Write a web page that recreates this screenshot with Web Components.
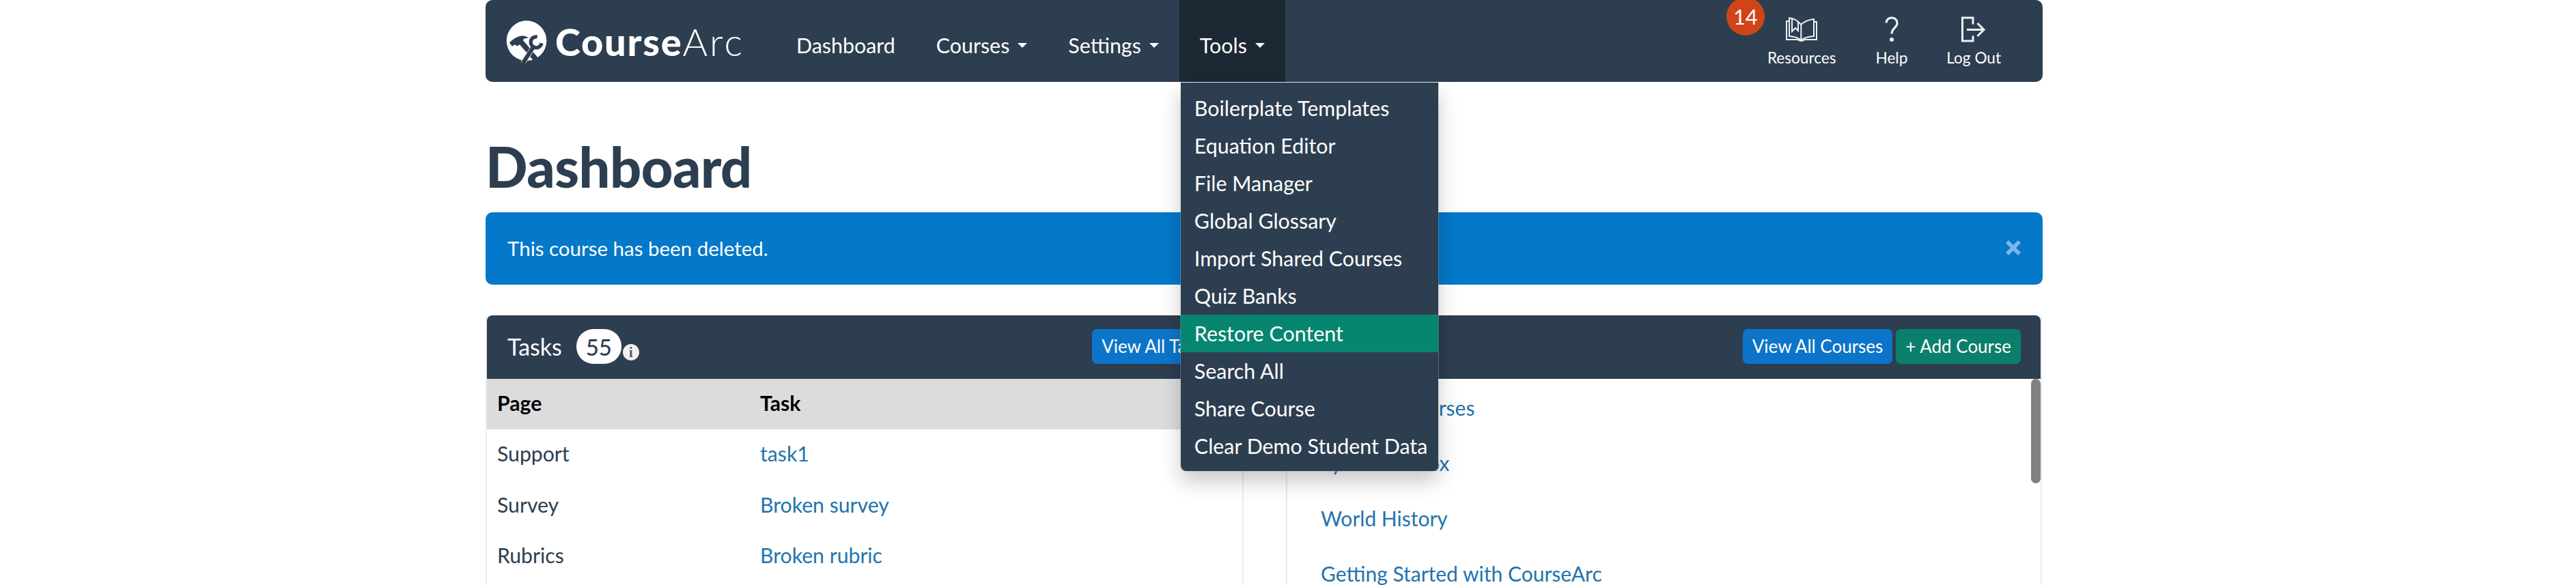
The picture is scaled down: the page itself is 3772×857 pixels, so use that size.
<!DOCTYPE html>
<html lang="en">
<head>
<meta charset="utf-8">
<title>CourseArc Dashboard</title>
<style>
  html, body { margin: 0; background: #fff; overflow: hidden; }
  body { font-family: Lato, "Open Sans", sans-serif; color: #2c3e50; height: 857px; }
  .page { width: 2280px; margin-left: 711px; }
</style>
</head>
<body>
<div class="page">
  <ca-navbar></ca-navbar>
  <ca-heading>Dashboard</ca-heading>
  <ca-alert>This course has been deleted.</ca-alert>
  <ca-columns>
    <ca-tasks slot="left"></ca-tasks>
    <ca-courses slot="right"></ca-courses>
  </ca-columns>
</div>

<script>
class CaNavbar extends HTMLElement {
  connectedCallback() {
    const tools = ['Boilerplate Templates', 'Equation Editor', 'File Manager', 'Global Glossary',
      'Import Shared Courses', 'Quiz Banks', 'Restore Content', 'Search All', 'Share Course', 'Clear Demo Student Data'];
    this.attachShadow({ mode: 'open' });
    this.shadowRoot.innerHTML = `
      <style>
        :host { display: block; position: relative; z-index: 10; }
        nav {
          background: #2d3e50; height: 120px; border-radius: 10px;
          display: flex; align-items: stretch; color: #fff; font-size: 30.400px;
        }
        .logo { display: flex; align-items: center; flex: none; margin-left: 24px; width: 401px; gap: 3px; }
        .logo svg { width: 75px; height: 72px; flex: none; position: relative; top: -2px; }
        .word { font-size: 56px; line-height: 1; font-weight: 900; letter-spacing: 1.700px; position: relative; top: 1px; }
        .word span { font-weight: 300; letter-spacing: 3.200px; }
        .menu { display: flex; align-items: stretch; }
        .item { display: flex; align-items: center; padding: 12px 30px 0; position: relative; }
        .caret { width: 0; height: 0; border: 7.500px solid transparent; border-top-color: #fff; border-bottom: 0; margin-left: 12px; }
        .open { background: #1c2833; }
        .right { margin-left: auto; display: flex; align-items: stretch; padding-right: 61px; }
        .tool { display: flex; flex-direction: column; align-items: center; font-size: 22.600px; padding-top: 24px; position: relative; }
        .tool svg { height: 38px; display: block; margin-bottom: 9px; }
        .badge {
          position: absolute; left: -60px; top: -4px; width: 56px; height: 56px; border-radius: 50%;
          background: #cf4517; color: #fff; font-size: 31px; display: flex; align-items: center; justify-content: center;
        }
        .drop {
          position: absolute; left: 2px; top: 121px; width: 377px; padding: 10px 0 9px; box-sizing: border-box;
          background: #2d3e50; border-radius: 0 0 8px 8px;
          box-shadow: 0 15px 30px rgba(0,0,0,.22), 0 0 0 1px rgba(200,205,215,.35);
        }
        .drop a { display: block; height: 55px; line-height: 55px; padding-left: 20px; color: #fff; white-space: nowrap; }
        .drop a.on { background: #07866f; }
      </style>
      <nav>
        <div class="logo">
          <svg viewBox="0 0 225 216">
            <circle cx="108" cy="113" r="88" fill="#fff"/>
            <path fill="#2d3e50" d="M33 122C45 108 62 96 82 92c16-2 28 2 36 10-14-2-22 2-26 8l72 84-17 16-69-80-12 7-8-7-13 7z"/>
            <path fill="none" stroke="#fff" stroke-width="22" d="M92 212l46-72"/>
            <path fill="none" stroke="#2d3e50" stroke-width="18" d="M92 212l46-72"/>
            <path fill="none" stroke="#2d3e50" stroke-width="16" d="M155 96a24 24 0 1 0 19 28"/>
            <path fill="#2d3e50" d="M84 216l12-12 14 12zM160 216l-8-10 14-8 10 18z"/>
          </svg>
          <span class="word">Course<span>Arc</span></span>
        </div>
        <div class="menu">
          <div class="item">Dashboard</div>
          <div class="item">Courses<i class="caret"></i></div>
          <div class="item">Settings<i class="caret"></i></div>
          <div class="item open">Tools<i class="caret"></i>
            <div class="drop">
              ${tools.map(t => `<a class="${t === 'Restore Content' ? 'on' : ''}">${t}</a>`).join('')}
            </div>
          </div>
        </div>
        <div class="right">
          <div class="tool">
            <span class="badge">14</span>
            <svg viewBox="0 0 46 38" width="46" fill="none" stroke="#eef1f4" stroke-width="2">
              <path d="M22.300 12C18 7 12 3 5 2.300V29c7 .5 13 2 17.300 6 4.700-4 10.700-5.500 18.700-6V4c-8 1-14 3-18.700 8zM22.300 12v23"/>
              <path d="M9 3v19l5-5 4 4V8"/>
              <path d="M5 7H1v27h15c3 0 4 2 6.300 2 2.700 0 3.700-2 6.700-2h16V8h-4"/>
            </svg>
            <span>Resources</span>
          </div>
          <div class="tool" style="margin-left:58px">
            <svg viewBox="0 0 20 38" width="20" fill="none" stroke="#eef1f4" stroke-width="3.200">
              <path d="M2 9.500C2 5 5.500 2 10 2s8 3 8 7.500c0 7-8 8-8 16"/>
              <circle cx="10" cy="34" r="3" fill="#eef1f4" stroke="none"/>
            </svg>
            <span>Help</span>
          </div>
          <div class="tool" style="margin-left:57px">
            <svg viewBox="0 0 36 37" width="36" fill="none" stroke="#eef1f4" stroke-width="3">
              <path d="M17 11V1.500H1.500v34H17V28"/>
              <path d="M8 19h25M23.500 9.500L33 19l-9.500 9.500"/>
            </svg>
            <span>Log Out</span>
          </div>
        </div>
      </nav>`;
  }
}
customElements.define('ca-navbar', CaNavbar);

class CaHeading extends HTMLElement {
  connectedCallback() {
    this.attachShadow({ mode: 'open' });
    this.shadowRoot.innerHTML = `
      <style>
        :host { display: block; padding-top: 74px; height: 117px; }
        h1 { margin: 0; font-size: 81px; line-height: 100px; font-weight: 900; letter-spacing: -.5px; color: #2c3e50; }
      </style>
      <h1><slot></slot></h1>`;
  }
}
customElements.define('ca-heading', CaHeading);

class CaAlert extends HTMLElement {
  connectedCallback() {
    this.attachShadow({ mode: 'open' });
    this.shadowRoot.innerHTML = `
      <style>
        :host {
          display: flex; align-items: center; justify-content: space-between; height: 106px; margin-bottom: 45px;
          box-sizing: border-box;
          background: #0478c9; border-radius: 10px; color: #fff; font-size: 29.500px; padding: 0 31px 2px 32px;
        }
        svg { width: 24px; height: 24px; }
      </style>
      <span><slot></slot></span>
      <svg viewBox="0 0 24 24"><path d="M3 3l18 18M21 3L3 21" stroke="#7fb5e6" stroke-width="6"/></svg>`;
  }
}
customElements.define('ca-alert', CaAlert);

class CaColumns extends HTMLElement {
  connectedCallback() {
    this.attachShadow({ mode: 'open' });
    this.shadowRoot.innerHTML = `
      <style>
        :host { display: grid; grid-template-columns: 1110px 1107px; column-gap: 62px; }
      </style>
      <slot name="left"></slot><slot name="right"></slot>`;
  }
}
customElements.define('ca-columns', CaColumns);

const panelCss = `
  .head {
    background: #2d3e50; color: #fff; height: 93px; border-radius: 8px 8px 0 0; box-sizing: border-box;
    display: flex; align-items: center; padding: 0 29px 2px 30px; font-size: 34px;
  }
  .btn {
    height: 51px; line-height: 51px; border-radius: 7px; padding: 0 14px; color: #fff; font-size: 26px; white-space: nowrap;
  }
  .blue { background: #0d75c9; }
  .green { background: #0a7f6c; }
  .btns { margin-left: auto; display: flex; gap: 5px; }
  a { color: #2273ad; }
`;

class CaTasks extends HTMLElement {
  connectedCallback() {
    const rows = [['Support', 'task1'], ['Survey', 'Broken survey'], ['Rubrics', 'Broken rubric']];
    this.attachShadow({ mode: 'open' });
    this.shadowRoot.innerHTML = `
      <style>
        :host { display: block; height: 395px; overflow: hidden; border: solid #e9ecef; border-width: 0 2px; }
        ${panelCss}
        .pill {
          width: 66px; height: 51px; border-radius: 25px; background: #fff; color: #2c3e50; margin-left: 21px;
          display: flex; align-items: center; justify-content: center; font-size: 33px; font-weight: 500;
        }
        .info {
          width: 24px; height: 24px; border-radius: 50%; background: #f1f1f1; color: #555; margin: 16px 0 0 2px;
          font: 700 20px/24px "Liberation Serif", serif; text-align: center;
        }
        .row {
          display: grid; grid-template-columns: 385px 1fr; padding: 0 0 4px 15px; box-sizing: border-box;
          align-items: center; height: 74.500px; font-size: 30.200px; color: #2c3e50;
        }
        .th { height: 74px; background: #dcdcdc; color: #000; font-weight: 700; }
      </style>
      <div class="head">
        Tasks<span class="pill">55</span><span class="info">i</span>
        <div class="btns" style="margin-right:3px"><span class="btn blue">View All Tasks</span></div>
      </div>
      <div class="row th"><span>Page</span><span>Task</span></div>
      ${rows.map(r => `<div class="row"><span>${r[0]}</span><a>${r[1]}</a></div>`).join('')}`;
  }
}
customElements.define('ca-tasks', CaTasks);

class CaCourses extends HTMLElement {
  connectedCallback() {
    const list = ['Example Courses', 'Systems Inbox', 'World History', 'Getting Started with CourseArc'];
    this.attachShadow({ mode: 'open' });
    this.shadowRoot.innerHTML = `
      <style>
        :host { display: block; height: 395px; overflow: hidden; border: solid #e9ecef; border-width: 0 2px; position: relative; }
        ${panelCss}
        ul { list-style: none; margin: 0; padding: 2px 0 0 49px; font-size: 30px; }
        li { height: 81px; line-height: 81px; }
        .thumb { position: absolute; right: 0; top: 93px; width: 14px; height: 153px; border-radius: 7px; background: #808080; }
      </style>
      <div class="head">
        <div class="btns"><span class="btn blue">View All Courses</span><span class="btn green">+ Add Course</span></div>
      </div>
      <ul>${list.map(c => `<li><a>${c}</a></li>`).join('')}</ul>
      <div class="thumb"></div>`;
  }
}
customElements.define('ca-courses', CaCourses);
</script>
</body>
</html>
